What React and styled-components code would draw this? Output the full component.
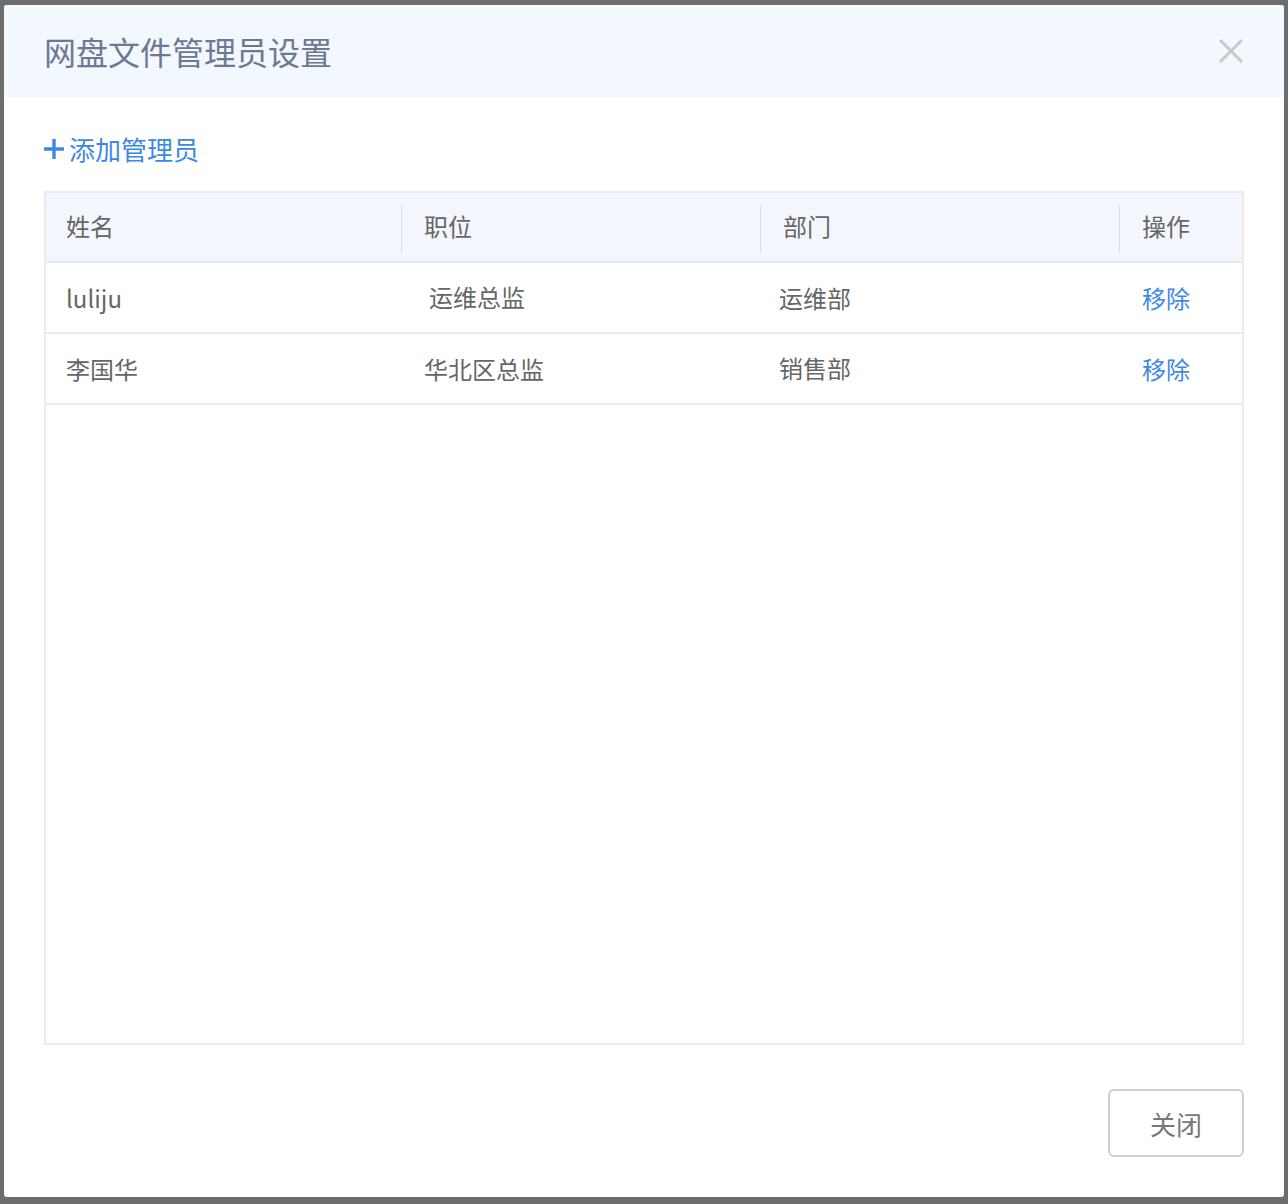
import React from "react";
import styled, { createGlobalStyle } from "styled-components";

const Global = createGlobalStyle`
  html, body { margin: 0; padding: 0; background: #6d6d6d; }
  body { font-family: "Noto Sans CJK SC", "Noto Sans", sans-serif; }
  * { box-sizing: border-box; }
`;

const Overlay = styled.div`
  width: 1288px;
  height: 1204px;
  background: #6d6d6d;
  padding: 5px 4px 7px 4px;
  display: flex;
`;

const Dialog = styled.div`
  width: 1280px;
  height: 1192px;
  background: #fff;
  border-radius: 3px;
  overflow: hidden;
  display: flex;
  flex-direction: column;
`;

const Header = styled.div`
  height: 92px;
  flex: none;
  background: #f3f7fe;
  display: flex;
  align-items: center;
  justify-content: space-between;
  padding: 0 41px 0 40px;
`;

const Title = styled.h2`
  margin: 0;
  font-weight: 400;
  font-size: 32px;
  color: #6b7a92;
`;

const Close = styled.button`
  border: 0;
  background: none;
  padding: 0;
  width: 24px;
  height: 24px;
  display: flex;
  cursor: pointer;
`;

const Body = styled.div`
  flex: 1;
  display: flex;
  flex-direction: column;
  padding: 0 40px 40px 40px;
`;

const AddLink = styled.a`
  display: flex;
  align-items: center;
  gap: 5px;
  height: 94px;
  color: #3d88e6;
  font-size: 26px;
  cursor: pointer;
  padding-top: 9px;
`;

const Table = styled.div`
  height: 854px;
  border: 2px solid #ebebeb;
  display: flex;
  flex-direction: column;
`;

const Row = styled.div`
  display: grid;
  grid-template-columns: 355px 359px 359px 1fr;
  height: ${(p) => (p.$head ? "70px" : "71px")};
  align-items: center;
  background: ${(p) => (p.$head ? "#f3f7fd" : "#fff")};
  border-bottom: 2px solid ${(p) => (p.$head ? "#e2e7f0" : "#ebebeb")};
`;

const Cell = styled.div`
  height: 100%;
  display: flex;
  align-items: center;
  padding-left: ${(p) => p.$pl ?? 20}px;
  font-size: 24px;
  color: ${(p) => (p.$link ? "#3d88e6" : "#666")};
  cursor: ${(p) => (p.$link ? "pointer" : "default")};
  position: relative;
  margin-top: ${(p) => p.$up ?? 0}px;
`;

const HeadCell = styled(Cell)`
  margin-top: -3px;
  &::before {
    content: "";
    display: ${(p) => (p.$first ? "none" : "block")};
    position: absolute;
    left: 0;
    top: 13px;
    bottom: 7px;
    width: 1px;
    background: #d8dde6;
  }
`;

const Footer = styled.div`
  display: flex;
  justify-content: flex-end;
  padding-top: 44px;
`;

const Button = styled.button`
  width: 136px;
  height: 68px;
  border: 2px solid #cfcfcf;
  border-radius: 6px;
  background: #fff;
  color: #777;
  font-family: inherit;
  font-size: 26px;
  cursor: pointer;
`;

const rows = [
  { name: "luliju", pos: "运维总监", posPl: 28, posUp: -2, dept: "运维部" },
  { name: "李国华", pos: "华北区总监", posPl: 23, posUp: 0, dept: "销售部", deptUp: -2 },
];

export default function App() {
  return (
    <>
      <Global />
      <Overlay>
        <Dialog>
          <Header>
            <Title>网盘文件管理员设置</Title>
            <Close aria-label="关闭">
              <svg width="24" height="24" viewBox="0 0 24 24">
                <path d="M1 1 L23 23 M23 1 L1 23" stroke="#c9c9c9" strokeWidth="3" fill="none" />
              </svg>
            </Close>
          </Header>
          <Body>
            <AddLink>
              <svg width="20" height="20" viewBox="0 0 20 20">
                <path d="M10 0 V20 M0 10 H20" stroke="#3d88e6" strokeWidth="3.4" fill="none" />
              </svg>
              添加管理员
            </AddLink>
            <Table>
              <Row $head>
                <HeadCell $first>姓名</HeadCell>
                <HeadCell $pl={23}>职位</HeadCell>
                <HeadCell $pl={23}>部门</HeadCell>
                <HeadCell $pl={23}>操作</HeadCell>
              </Row>
              {rows.map((r) => (
                <Row key={r.name}>
                  <Cell>{r.name}</Cell>
                  <Cell $pl={r.posPl} $up={r.posUp}>{r.pos}</Cell>
                  <Cell $pl={19} $up={r.deptUp}>{r.dept}</Cell>
                  <Cell $pl={23} $link>移除</Cell>
                </Row>
              ))}
            </Table>
            <Footer>
              <Button>关闭</Button>
            </Footer>
          </Body>
        </Dialog>
      </Overlay>
    </>
  );
}
